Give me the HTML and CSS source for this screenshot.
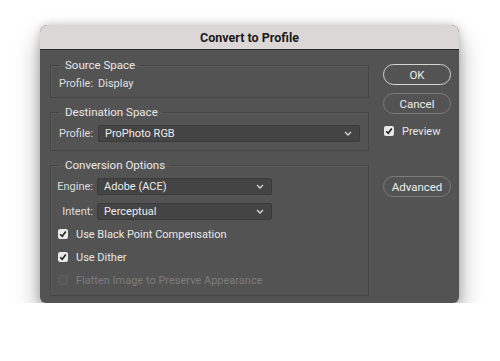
FILE: index.html
```html
<!DOCTYPE html>
<html>
<head>
<meta charset="utf-8">
<link rel="stylesheet" href="styles.css">
</head>
<body>
<div class="dialog">
  <div class="titlebar">Convert to Profile</div>
  <div class="content">
    <div class="left">
      <fieldset class="group g-source">
        <legend>Source Space</legend>
        <div class="row"><span class="lbl">Profile:</span><span class="val">Display</span></div>
      </fieldset>
      <fieldset class="group g-dest">
        <legend>Destination Space</legend>
        <div class="row"><span class="lbl">Profile:</span><div class="select wide"><span>ProPhoto RGB</span><svg class="chev" width="8" height="5" viewBox="0 0 8 5"><path d="M1 1 L4 4 L7 1" fill="none" stroke="#d8d8d8" stroke-width="1.3"/></svg></div></div>
      </fieldset>
      <fieldset class="group g-conv">
        <legend>Conversion Options</legend>
        <div class="row r-engine"><span class="lbl lbl-r">Engine:</span><div class="select narrow"><span>Adobe (ACE)</span><svg class="chev" width="8" height="5" viewBox="0 0 8 5"><path d="M1 1 L4 4 L7 1" fill="none" stroke="#d8d8d8" stroke-width="1.3"/></svg></div></div>
        <div class="row r-intent"><span class="lbl lbl-r">Intent:</span><div class="select narrow"><span>Perceptual</span><svg class="chev" width="8" height="5" viewBox="0 0 8 5"><path d="M1 1 L4 4 L7 1" fill="none" stroke="#d8d8d8" stroke-width="1.3"/></svg></div></div>
        <div class="check c-first"><span class="box on"><svg width="8" height="8" viewBox="0 0 8 8"><path d="M1.2 4.2 L3.2 6.2 L6.8 1.5" fill="none" stroke="#222" stroke-width="1.6"/></svg></span><span>Use Black Point Compensation</span></div>
        <div class="check"><span class="box on"><svg width="8" height="8" viewBox="0 0 8 8"><path d="M1.2 4.2 L3.2 6.2 L6.8 1.5" fill="none" stroke="#222" stroke-width="1.6"/></svg></span><span>Use Dither</span></div>
        <div class="check disabled"><span class="box off"></span><span>Flatten Image to Preserve Appearance</span></div>
      </fieldset>
    </div>
    <div class="right">
      <div class="btn btn-default">OK</div>
      <div class="btn">Cancel</div>
      <div class="check preview"><span class="box on"><svg width="8" height="8" viewBox="0 0 8 8"><path d="M1.2 4.2 L3.2 6.2 L6.8 1.5" fill="none" stroke="#222" stroke-width="1.6"/></svg></span><span>Preview</span></div>
      <div class="btn btn-adv">Advanced</div>
    </div>
  </div>
</div>
</body>
</html>
```

FILE: styles.css
```css
html, body {
  margin: 0;
  padding: 0;
  background: #ffffff;
}
body {
  font-family: Roboto, "Liberation Sans", sans-serif;
  font-size: 11px;
  color: #e2e2e2;
}
.dialog {
  margin: 25px 0 0 40px;
  width: 419px;
  height: 278px;
  background: #535353;
  border-radius: 8px 8px 6px 6px;
  overflow: hidden;
  box-shadow: 0 14px 24px rgba(0,0,0,0.36), 0 0 8px rgba(0,0,0,0.2);
  display: flex;
  flex-direction: column;
}
.titlebar {
  height: 24px;
  background: #dcd7d7;
  border-bottom: 1px solid #2c2c2c;
  color: #1a1a1a;
  font-weight: 700;
  font-size: 12.5px;
  display: flex;
  align-items: center;
  justify-content: center;
}
.content {
  display: flex;
  padding: 0 8px 0 10px;
}
.left {
  width: 319px;
  display: flex;
  flex-direction: column;
}
.group {
  margin: 0;
  border: 1px solid #454545;
  box-shadow: inset 1px 1px 0 #5b5b5b;
  padding: 0 8px;
  min-width: 0;
  box-sizing: border-box;
}
.group legend {
  padding: 0 5px 0 6px;
  margin-left: 0;
  color: #e8e8e8;
  font-size: 11.5px;
  line-height: 14px;
}
.g-source {
  margin-top: 8px;
  height: 40px;
  padding-top: 3px;
}
.g-dest {
  margin-top: 7px;
  height: 46px;
  padding-top: 6px;
}
.g-conv {
  margin-top: 7px;
  height: 138px;
  padding: 6px 6px 0 6px;
}
.g-conv legend { margin-left: 2px; }
.row {
  display: flex;
  align-items: center;
  height: 17px;
}
.lbl {
  color: #dedede;
  width: 33px;
  margin-right: 6px;
  white-space: nowrap;
  flex: none;
}
.lbl-r {
  width: 36px;
  margin-right: 4px;
  text-align: right;
}
.select {
  height: 15px;
  background: #444444;
  border: 1px solid #3b3b3b;
  border-radius: 2px;
  display: flex;
  align-items: center;
  justify-content: space-between;
  padding: 0 7px 0 6px;
  color: #ececec;
  box-sizing: content-box;
}
.select.wide { width: 250px; }
.select.narrow { width: 160px; }
.r-intent { margin-top: 8px; }
.check {
  display: flex;
  align-items: center;
  height: 14px;
  margin-top: 9px;
  gap: 8px;
  color: #e8e8e8;
}
.check.c-first { margin-top: 7px; }
.check .box {
  width: 10px;
  height: 10px;
  border-radius: 2px;
  display: flex;
  align-items: center;
  justify-content: center;
  margin-left: 1px;
  flex: none;
}
.box.on {
  background: #e8e8e8;
}
.box.off {
  background: #575757;
  border: 1px solid #5e5e5e;
  width: 8px;
  height: 8px;
}
.check.disabled { color: #7c7c7c; }
.right {
  margin-left: 14px;
  width: 68px;
  display: flex;
  flex-direction: column;
  padding-top: 14px;
}
.btn {
  height: 19px;
  border: 1.5px solid #7b7b7b;
  border-radius: 12px;
  display: flex;
  align-items: center;
  justify-content: center;
  color: #eeeeee;
  font-size: 11.5px;
  margin-bottom: 8px;
}
.btn-default {
  border-color: #d4d4d4;
}
.preview {
  margin-top: 2px;
  margin-left: 0;
}
.btn-adv {
  margin-top: 38px;
}
```
